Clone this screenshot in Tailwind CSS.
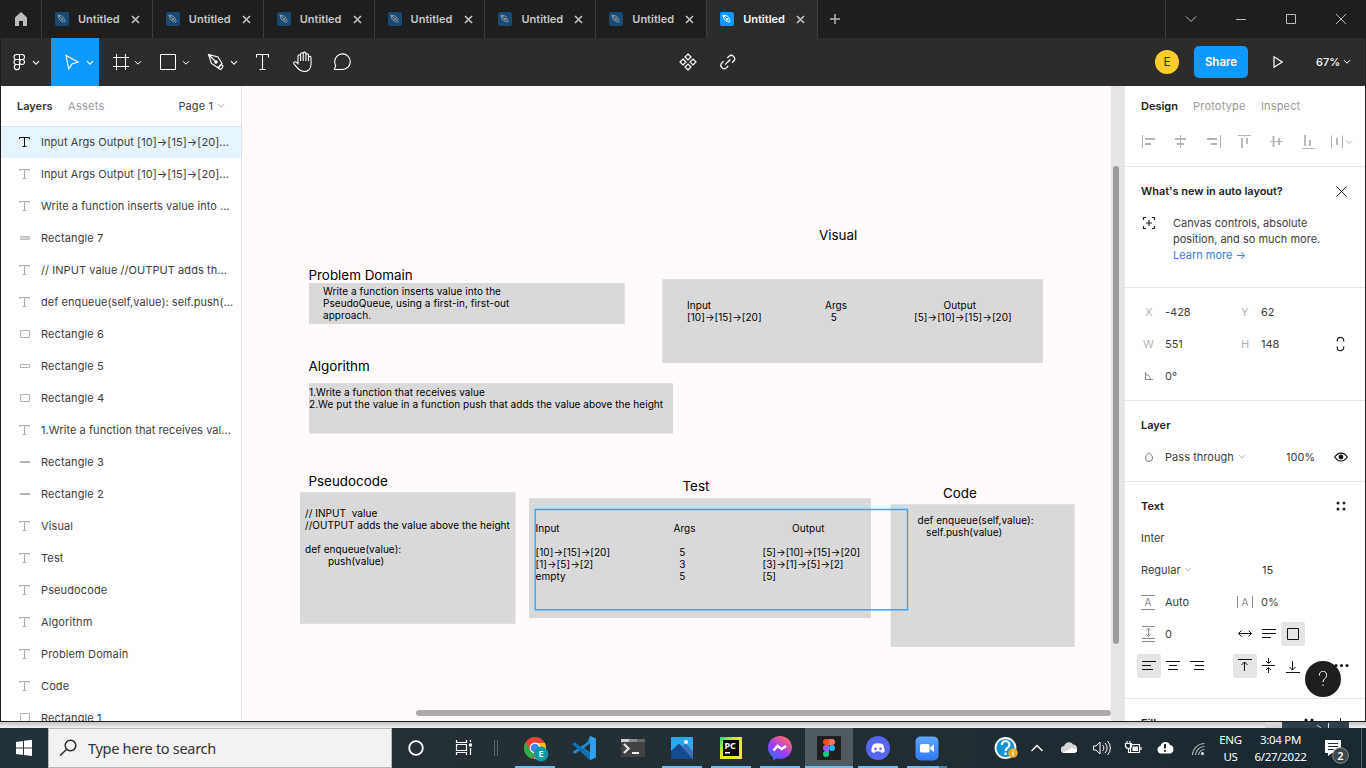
<!DOCTYPE html>
<html lang="en">
<head>
<meta charset="utf-8">
<title>Untitled – Figma</title>
<script src="https://cdn.jsdelivr.net/npm/@tailwindcss/browser@4"></script>
</head>
<body class="w-[1366px] h-[768px] overflow-hidden bg-[#e4e4e4] font-['Inter','Liberation_Sans',sans-serif] text-[11px] text-[#3c3c3c]">
<svg class="hidden">
  <symbol id="chev" viewBox="0 0 8 6"><path d="M1 1.2 4 4.2 7 1.2" fill="none" stroke="currentColor"/></symbol>
  <symbol id="tabpen" viewBox="0 0 14 14"><path d="M3 3l4.5 1.2 2.3 3.6-2 2-3.6-2.3zM3 3l4 4M8.8 10.8l2-2" fill="none" stroke="currentColor"/><circle cx="7.2" cy="7.2" r="1" fill="currentColor"/></symbol>
  <symbol id="x" viewBox="0 0 9 9"><path d="M1 1l7 7M8 1l-7 7" fill="none" stroke="currentColor" stroke-width="1.7"/></symbol>
  <symbol id="T" viewBox="0 0 12 12"><path d="M.5 3V1.500h10V3M5.500 1.500v9M3.500 10.500h4" fill="none" stroke="currentColor"/></symbol>
</svg>
<div class="flex flex-col h-[768px]">
  <div class="flex flex-col h-[722px] shrink-0 border-x border-b border-[#1e1e1e] bg-white">
    <!-- tab strip -->
    <div class="flex h-[38px] shrink-0 bg-[#1e1e1e] text-[#c6c6c6]">
      <div class="w-10 shrink-0"><svg class="w-10 h-[38px]" viewBox="1 0 40 38"><path d="M15 17.500 21 12l6 5.500V26h-4v-5h-4v5h-4z" fill="#bdbdbd"/></svg></div>
      <div id="tabs" class="flex w-[777px] shrink-0 border-r border-[#3a3a3a]"></div>
      <div class="flex w-[34px] items-center justify-center"><svg class="size-[10px]" viewBox="0 0 10 10"><path d="M5 0v10M0 5h10" stroke="#b8b8b8" stroke-width="1.500"/></svg></div>
      <svg class="ml-auto w-[200px] h-[38px] shrink-0" viewBox="1165 0 200 38" fill="none" stroke="#bdbdbd"><path d="M1165.500 0v38" stroke="#3a3a3a"/><path d="M1186 16.500l5 5 5-5M1236 19.500h10M1286.500 14.500h9v9h-9zM1336 14l10 10M1346 14l-10 10"/></svg>
    </div>
    <!-- toolbar -->
    <div class="flex h-12 shrink-0 bg-[#2c2c2c] text-white">
      <svg class="w-[50px] h-12" viewBox="1 38 50 48" fill="none" stroke="#fff" stroke-width="1.100"><path d="M19.500 54.500h-3a2.500 2.500 0 000 5h3zM19.500 54.500h2.500a2.500 2.500 0 010 5h-2.500zM19.500 59.500h-3a2.500 2.500 0 000 5h3zM16.500 64.500h3v2.500a2.600 2.600 0 11-3-2.500z"/><circle cx="22" cy="62" r="2.500"/><path d="M33 61.200l3 3 3-3"/></svg>
      <div class="w-12 bg-[#0d99ff]"><svg class="w-12 h-12" viewBox="51 38 48 48" fill="none" stroke="#fff" stroke-width="1.200"><path d="M66 55.500l12 6.500-6 2-3.300 5z"/><path d="M87 61.200l3 3 3-3"/></svg></div>
      <svg class="w-12 h-12" viewBox="99 38 48 48" fill="none" stroke="#fff"><path d="M116.500 54v16M125.500 54v16M113 57.500h16M113 66.500h16M135 61.200l3 3 3-3"/></svg>
      <svg class="w-12 h-12" viewBox="147 38 48 48" fill="none" stroke="#fff"><path d="M160.500 54.500h15v15h-15zM183 61.200l3 3 3-3"/></svg>
      <svg class="w-12 h-12" viewBox="195 38 48 48" fill="none" stroke="#fff" stroke-width="1.100"><path d="M208.500 54.500l9.500 2.500 4 6.500-3.500 3.500-1 .5-6-4zM208.500 54.500l7.500 7.500M218.500 68.500l1-2 2-2 1.300 1v1.500l-2 2.500z"/><circle cx="216" cy="62" r="1.200" fill="#fff"/><path d="M231 61.200l3 3 3-3"/></svg>
      <svg class="w-10 h-12" viewBox="243 38 40 48" fill="none" stroke="#fff" stroke-width="1.100"><path d="M256.500 57.500v-3h12v3M262.500 54.500v15M259.500 69.500h6"/></svg>
      <svg class="w-10 h-12" viewBox="283 38 40 48" fill="none" stroke="#fff" stroke-width="1.100"><path d="M298 62v-6a1.300 1.300 0 012.600 0v-2a1.300 1.300 0 012.600 0v-.5a1.300 1.300 0 012.700 0v1.500a1.300 1.300 0 012.600 0v2.500a1.250 1.250 0 012.500 0v7c0 4-2.600 7-6.800 7-4.700 0-6.200-3-10.100-7.300-1.300-1.500.6-3.200 2.200-2l1.700 1.500zM300.600 55.500v5.500M303.200 54v7M305.900 54v7M308.500 56v5"/></svg>
      <svg class="w-10 h-12" viewBox="323 38 40 48" fill="none" stroke="#fff" stroke-width="1.100"><path d="M334.300 69.500h8.200a7.800 7.800 0 10-7.800-7.500c0 1.500.4 2.700 1 3.700z"/></svg>
      <svg class="ml-[305px] w-10 h-12" viewBox="668 38 40 48" fill="none" stroke="#fff" stroke-width="1.200"><path d="M688 54l3 3-3 3-3-3zM688 64l3 3-3 3-3-3zM683 59l3 3-3 3-3-3zM693 59l3 3-3 3-3-3z"/></svg>
      <svg class="w-10 h-12" viewBox="708 38 40 48" fill="none" stroke="#fff" stroke-width="1.300"><path d="M727.300 58l1.600-1.600a3.300 3.300 0 014.700 4.700l-1.600 1.600M728.200 66l-1.600 1.600a3.300 3.300 0 01-4.700-4.700l1.600-1.600M725.300 64.500l5-5"/></svg>
      <div class="ml-auto mr-[14px] flex items-center">
        <div class="flex size-6 items-center justify-center rounded-full bg-[#ffcd29] text-xs text-[#333]">E</div>
        <div class="ml-[15px] flex h-8 w-[54px] items-center justify-center rounded-[5px] bg-[#0d99ff] pt-px text-[11.500px] font-semibold">Share</div>
        <svg class="ml-[22px] w-4 h-4" viewBox="1270 54 16 16" fill="none" stroke="#fff" stroke-width="1.200"><path d="M1274 56.800v10.400l8.300-5.200z"/></svg>
        <div class="ml-[30px] w-[27px] pt-px text-[11px] font-medium">67%</div>
        <svg class="w-2 h-1.5"><use href="#chev"/></svg>
      </div>
    </div>
    <!-- workspace -->
    <div class="flex h-[635px] shrink-0 overflow-hidden">
      <div class="w-[241px] shrink-0 border-r border-[#e5e5e5] overflow-hidden">
        <div class="flex h-10 items-center pl-4 pr-4">
          <span class="w-[51px] font-semibold text-[#333]">Layers</span><span class="text-[#9a9a9a] tracking-[.3px]">Assets</span>
          <span class="ml-auto mr-1 tracking-[.1px]">Page 1</span><svg class="w-2 h-1.5 text-[#aaa]"><use href="#chev"/></svg>
        </div>
        <div id="layers"></div>
      </div>
      <!-- canvas -->
      <div id="canvas" class="relative w-[869px] shrink-0 overflow-hidden bg-[#fffbfa] text-[10px] leading-[12.1px] tracking-[.055px] text-black whitespace-pre">
        <svg class="absolute left-0 top-0 w-[869px] h-[635px]" viewBox="242 86 869 635" fill="#d9d9d9"><path d="M309 283h315.700v41H309zM662.300 279.300H1043V363H662.300zM309 383.300h364v50.300H309zM300 492.300h215.500v131.500H300zM529 498.300h342V618H529zM890.600 504.300h184V647h-184z"/></svg>
        <div class="absolute left-[66.500px] top-[181px] text-[13.400px] leading-4 tracking-normal">Problem Domain</div>
        <div class="absolute left-[66.500px] top-[272px] text-[13.400px] leading-4 tracking-normal">Algorithm</div>
        <div class="absolute left-[577px] top-[141px] text-[13.400px] leading-4 tracking-normal">Visual</div>
        <div class="absolute left-[66.500px] top-[387px] text-[13.400px] leading-4 tracking-normal">Pseudocode</div>
        <div class="absolute left-[440.500px] top-[392px] text-[13.400px] leading-4 tracking-normal">Test</div>
        <div class="absolute left-[701px] top-[399px] text-[13.400px] leading-4 tracking-normal">Code</div>
        <div class="absolute left-[81px] top-[199px]">Write a function inserts value into the
PseudoQueue, using a first-in, first-out
approach.</div>
        <div class="absolute left-[67px] top-[300px]">1.Write a function that receives value
2.We put the value in a function push that adds the value above the height</div>
        <div class="absolute left-[445px] top-[213px]">Input
[10]→[15]→[20]</div>
        <div class="absolute left-[583px] top-[213px]">Args
  5</div>
        <div class="absolute left-[672px] top-[213px]"><span class="pl-[29.500px]">Output</span>
[5]→[10]→[15]→[20]</div>
        <div class="absolute left-[63px] top-[420.500px]">// INPUT  value
//OUTPUT adds the value above the height

def enqueue(value):
        push(value)</div>
        <div class="absolute left-[293.500px] top-[436px]">Input

[10]→[15]→[20]
[1]→[5]→[2]
empty</div>
        <div class="absolute left-[431.500px] top-[436px]">Args

  5
  3
  5</div>
        <div class="absolute left-[520.500px] top-[436px]"><span class="pl-[29.500px]">Output</span>

[5]→[10]→[15]→[20]
[3]→[1]→[5]→[2]
[5]</div>
        <div class="absolute left-[675.500px] top-[427.500px]">def enqueue(self,value):
   self.push(value)</div>
        <svg class="absolute left-[292px] top-[422px] w-[375px] h-[104px]" viewBox="534 508 375 104" fill="none"><path d="M535.200 509.500h372.300v100.300H535.200z" stroke="#37a5fb" stroke-width="1.400"/></svg>
        <div class="absolute left-[174px] top-[624px] w-[695px] h-1.5 rounded-full bg-[#adacab]"></div>
      </div>
      <div class="w-[14px] shrink-0 bg-[#e5e5e5] pl-0.5 pt-20"><div class="h-[478px] w-1.5 rounded-full bg-[#9c9c9c]"></div></div>
      <!-- inspector -->
      <div class="w-[240px] shrink-0">
        <div class="h-[81px] border-b border-[#e5e5e5]">
          <div class="flex h-10 items-center pl-4"><span class="w-[52px] font-semibold text-[#222]">Design</span><span class="w-[68px] text-[#999] tracking-[.2px]">Prototype</span><span class="text-[#999] tracking-[.15px]">Inspect</span></div>
          <svg class="w-[240px] h-10" viewBox="1125 126 240 40" fill="none" stroke="#b3b3b3"><path d="M1142.500 135v13M1220.500 135v13M1238 135.500h13M1302 148.500h13M1180.500 135v13M1270 141.500h13M1331.500 135.500v13M1342.500 135.500v13"/><path d="M1145 139h10M1145 144h6M1175 139h11M1177 144h7M1207 139h10M1211 144h6M1242 138v10M1247 138v6M1273.500 136v11M1279 138v7M1305 135v11M1310 140v6M1337 138v7" stroke-width="1.800"/><path d="M1346 140.500l3 3 3-3"/></svg>
        </div>
        <div class="h-[121px] border-b border-[#e5e5e5]">
          <div class="flex h-12 items-center pl-4 pr-[18px] justify-between"><span class="font-semibold text-[#222] tracking-[-.04px]">What's new in auto layout?</span><svg class="size-[11px]" viewBox="0 0 11 11"><path d="M.5.5l10 10M10.500.5l-10 10" stroke="#222"/></svg></div>
          <div class="flex pl-[17px]"><svg class="mt-px size-[14px] shrink-0" viewBox="1142 216 14 14" fill="none" stroke="#222" stroke-width="1.200"><path d="M1143.500 220v-2.500h2.500M1152 217.500h2.500v2.500M1154.500 226v2.500h-2.500M1146 228.500h-2.500v-2.500M1149 220v6M1146 223h6"/></svg>
          <div class="ml-[17px] leading-4 whitespace-pre">Canvas controls, absolute
position, and so much more.
<span class="text-[#3a7bf0]">Learn more →</span></div></div>
        </div>
        <div class="h-[113px] border-b border-[#e5e5e5] pt-2">
          <div class="flex h-8 items-center pl-5"><span class="w-5 text-[#b3b3b3]">X</span><span class="w-[76px]">-428</span><span class="w-5 text-[#b3b3b3]">Y</span><span>62</span></div>
          <div class="flex h-8 items-center pl-[18px]"><span class="w-[22px] text-[#b3b3b3]">W</span><span class="w-[76px]">551</span><span class="w-5 text-[#b3b3b3]">H</span><span class="w-[74px]">148</span><svg class="w-[10px] h-4" viewBox="1335 336 10 16" fill="none" stroke="#222" stroke-width="1.200"><path d="M1337.300 341.500v-1a3.200 3.200 0 016.400 0v1M1337.300 346.500v1a3.200 3.200 0 006.400 0v-1"/></svg></div>
          <div class="flex h-8 items-center pl-[19px]"><svg class="w-[21px] h-4" viewBox="1144 368 21 16" fill="none" stroke="#888"><path d="M1145.500 372v7.500h7.500M1145.500 374.500a5 5 0 015 5"/></svg><span>0°</span></div>
        </div>
        <div class="h-[81px] border-b border-[#e5e5e5]">
          <div class="flex h-12 items-center pl-4 font-semibold text-[#222]">Layer</div>
          <div class="-mt-2 flex h-8 items-center pl-5"><svg class="w-5 h-3.5" viewBox="1145 450 20 14" fill="none" stroke="#777"><path d="M1149 452.500c2.500 2.500 3.500 4 3.500 5.500a3.500 3.500 0 01-7 0c0-1.500 1-3 3.500-5.500z"/></svg><span class="w-[73px] tracking-[.05px]">Pass through</span><svg class="w-2 h-1.5 text-[#b0b0b0]"><use href="#chev"/></svg><span class="ml-10 w-12">100%</span><svg class="w-[14px] h-[10px]" viewBox="0 0 14 10" fill="none" stroke="#111" stroke-width="1.200"><path d="M.7 5C4-.3 10-.3 13.300 5 10 10.300 4 10.300.7 5z"/><circle cx="7" cy="5" r="1.800" fill="#111"/></svg></div>
        </div>
        <div class="relative h-[217px] border-b border-[#e5e5e5]">
          <div class="flex h-12 items-center justify-between pl-4 pr-[19px] font-semibold text-[#222]"><span>Text</span><svg class="size-[10px]" viewBox="0 0 10 10" fill="#222"><circle cx="2" cy="2" r="1.500"/><circle cx="8" cy="2" r="1.500"/><circle cx="2" cy="8" r="1.500"/><circle cx="8" cy="8" r="1.500"/></svg></div>
          <div class="-mt-2 flex h-8 items-center pl-4">Inter</div>
          <div class="flex h-8 items-center pl-4"><span class="w-[43px]">Regular</span><svg class="w-2 h-1.5 text-[#b0b0b0]"><use href="#chev"/></svg><span class="ml-[70px]">15</span></div>
          <div class="flex h-8 items-center pl-4 text-[#888]"><span class="flex h-[15px] w-[14px] items-center justify-center border-y border-[#888] text-[10px]">A</span><span class="ml-[10px] w-[72px] text-[#3c3c3c]">Auto</span><span class="flex h-3 w-4 items-center justify-center border-x border-[#888] text-[10px]">A</span><span class="ml-2 text-[#3c3c3c]">0%</span></div>
          <div class="flex h-8 items-center pl-4"><svg class="w-6 h-4" viewBox="1141 626 24 16" fill="none" stroke="#888"><path d="M1142 626.500h13M1142 638.500h13M1142 641.500h13M1148.500 628.500v7M1146 630.500l2.500-2.500 2.500 2.500M1146 634l2.500 2.500 2.500-2.500"/></svg><span class="w-[68px]">0</span>
            <svg class="size-6" viewBox="1233 622 24 24" fill="none" stroke="#111"><path d="M1238.500 633.500h13M1241.500 630.500l-3 3 3 3M1248.500 630.500l3 3-3 3"/></svg>
            <svg class="size-6" viewBox="1257 622 24 24" fill="none" stroke="#111"><path d="M1262 629.500h14M1262 633.500h14M1262 637.500h9"/></svg>
            <svg class="size-6 rounded-xs bg-[#e5e5e5]" viewBox="1281 622 24 24" fill="none" stroke="#111"><path d="M1287.500 628.500h11v11h-11z"/></svg></div>
          <div class="flex h-8 items-center pl-3">
            <svg class="size-6 rounded-xs bg-[#e5e5e5]" viewBox="1137 654 24 24" fill="none" stroke="#111"><path d="M1142 661.500h14M1142 665.500h9M1142 669.500h11"/></svg>
            <svg class="size-6" viewBox="1161 654 24 24" fill="none" stroke="#111"><path d="M1166 661.500h14M1169 665.500h8M1168 669.500h10"/></svg>
            <svg class="size-6" viewBox="1185 654 24 24" fill="none" stroke="#111"><path d="M1190 661.500h14M1195 665.500h9M1194 669.500h10"/></svg>
            <svg class="ml-6 size-6 rounded-xs bg-[#e5e5e5]" viewBox="1233 654 24 24" fill="none" stroke="#111"><path d="M1238 659.500h14M1244.500 671v-9M1241.500 665l3-3 3 3"/></svg>
            <svg class="size-6" viewBox="1257 654 24 24" fill="none" stroke="#111"><path d="M1262 665.500h13M1268.500 658v5M1266 661l2.500 2.500 2.500-2.500M1268.500 673v-5M1266 670l2.500-2.500 2.500 2.500"/></svg>
            <svg class="size-6" viewBox="1281 654 24 24" fill="none" stroke="#111"><path d="M1286 672.500h14M1292.500 661v9M1289.500 667l3 3 3-3"/></svg>
            <svg class="ml-6 w-6 h-6" viewBox="1329 654 24 24" fill="#111"><circle cx="1336" cy="665.500" r="1.500"/><circle cx="1341.500" cy="665.500" r="1.500"/><circle cx="1347" cy="665.500" r="1.500"/></svg>
          </div>
          <div class="absolute left-[180px] top-[179px] flex size-9 items-center justify-center rounded-full bg-[#1e1e1e]"><svg class="w-3 h-4" viewBox="0 0 12 16" fill="none" stroke="#fff"><path d="M2.500 4.500a3.600 3.600 0 117 .2C9.500 7.500 6 7.500 6 11M6 13.500v1.500"/></svg></div>
        </div>
        <div class="flex h-12 items-center justify-between pl-4 pr-[19px] font-semibold text-[#222]"><span>Fill</span><svg class="w-[43px] h-[11px]" viewBox="0 0 43 11"><g fill="#111"><circle cx="3" cy="2" r="1.500"/><circle cx="9" cy="2" r="1.500"/><circle cx="3" cy="8" r="1.500"/><circle cx="9" cy="8" r="1.500"/></g><path d="M37.500 0v11M32 5.500h11" stroke="#111"/></svg></div>
      </div>
    </div>
  </div>
  <!-- strip between window and taskbar -->
  <div class="flex h-1.5 shrink-0 bg-linear-to-b from-[#c2c2c2] to-[#f2f2f2]"><div class="ml-[1265px] w-[17px] bg-[#d5d5d5]"></div><div class="w-[67px] bg-[#2f3f4c]"><svg class="w-[67px] h-1.5" viewBox="1282 722 67 6" fill="none" stroke="#ddd"><path d="M1317 725l4 3M1328.500 723v5"/></svg></div></div>
  <!-- taskbar -->
  <div class="flex h-10 shrink-0 bg-linear-to-r from-[#24323a] via-[#242f34] to-[#1a2830] font-['Noto_Sans','Open_Sans',sans-serif] text-white">
    <svg class="w-12 h-10 shrink-0" viewBox="0 728 48 40" fill="#fff"><path d="M16 742l7-1v6.500h-7zM24 740.800l8-1v7.700h-8zM16 748.500h7v6.500l-7-1zM24 748.500h8v7.500l-8-1z"/></svg>
    <div class="flex w-[344px] shrink-0 items-center border border-[#b9b9b9] bg-[#f2f2f2] text-[#333]"><svg class="ml-2.5 w-[18px] h-[18px]" viewBox="59 739 18 18" fill="none" stroke="#222" stroke-width="1.400"><circle cx="70.500" cy="745.500" r="5.300"/><path d="M66.500 749.500l-6.500 6"/></svg><span class="ml-[11px] pt-px text-[14.500px] tracking-[-.29px]">Type here to search</span></div>
    <svg class="w-12 h-10 shrink-0" viewBox="392 728 48 40"><circle cx="416" cy="748" r="6.800" fill="none" stroke="#fff" stroke-width="1.800"/></svg>
    <svg class="w-12 h-10 shrink-0" viewBox="440 728 48 40" fill="none" stroke="#fff" stroke-width="1.200"><path d="M456.500 740v2.500h10V740M456.500 755v-2.500h10v2.500M456.500 744.500h10v6h-10zM470.500 740v2M470.500 748v7"/><path d="M469 743.500h3v3h-3z" fill="#fff" stroke="none"/></svg>
    <svg class="w-[23px] h-10 shrink-0" viewBox="488 728 23 40"><path d="M494.500 740v16M497.500 740v16" stroke="#5d666b"/></svg>
    <svg class="w-[440px] h-10 shrink-0" viewBox="511 728 440 40">
      <defs>
        <linearGradient id="ms" x1="0" y1="1" x2=".7" y2="0"><stop offset="0" stop-color="#1a7bff"/><stop offset=".5" stop-color="#9a3cff"/><stop offset="1" stop-color="#ff6a6a"/></linearGradient>
        <linearGradient id="pc" x1="0" y1="0" x2="1" y2="1"><stop offset="0" stop-color="#21d789"/><stop offset=".35" stop-color="#d8e52a"/><stop offset="1" stop-color="#f4f02a"/></linearGradient>
        <linearGradient id="zm" x1="0" y1="0" x2="0" y2="1"><stop offset="0" stop-color="#5ea6ff"/><stop offset="1" stop-color="#2f78f5"/></linearGradient>
      </defs>
      <path d="M805 728h48v40h-48z" fill="#505b61"/>
      <g fill="#76b9ed"><path d="M515 766h40v2h-40zM662 766h40v2h-40zM711 766h40v2h-40zM760 766h40v2h-40zM805 766h48v2h-48zM858 766h40v2h-40zM907 766h32v2h-32z"/><path d="M939 766h8v2h-8z" fill="#4d7f9f"/></g>
      <!-- chrome -->
      <g><circle cx="535" cy="748" r="11" fill="#ea4335"/><path d="M535 748h11a11 11 0 01-12 11z" fill="#fbc116"/><path d="M535 743h9.800a11 11 0 011.200 5h-11z" fill="#fbc116"/><path d="M525.500 742.500l5 8.500 4.500 2-3 5.600a11 11 0 01-6.500-16.100z" fill="#2da94f"/><circle cx="535" cy="748" r="5.400" fill="#fff"/><circle cx="535" cy="748" r="4.300" fill="#4285f4"/><circle cx="541" cy="754" r="7.400" fill="#0f97a3"/><text x="541" y="757.300" text-anchor="middle" font-size="9" font-weight="600" fill="#fff">E</text></g>
      <!-- editor -->
      <path d="M590 736l5.800 2.500v19l-5.800 2.500-10.500-9.500-4.200 3.300-2.300-1.200v-1.200L587 742.500z" fill="#1f8ad2"/><path d="M572.500 743.500l2.500-1.200 15 11.700v5.500l-17-14.500z" fill="#0f6fb5"/><path d="M590 736l5.800 2.500v19L590 760z" fill="#2ba3f0"/><path d="M590 743.500v9l-6-4.500z" fill="#242f35"/>
      <!-- terminal -->
      <path d="M621 739h24v18h-24z" fill="#424242"/><path d="M621 739h8v3h-8z" fill="#d0d0d0"/><path d="M629 739h8v3h-8z" fill="#8d8d8d"/><path d="M637 739h8v3h-8z" fill="#666"/><path d="M624 744l4.500 4.500-4.500 4.500" fill="none" stroke="#ddd" stroke-width="2.400"/><path d="M632 752h7v2h-7z" fill="#eee"/>
      <!-- photos -->
      <path d="M671 737h22v22h-22z" fill="#2ea6ea"/><path d="M671 751l8-7.500 15 15.500h-23z" fill="#154a8d"/><path d="M682 747l3.500-3.500 7.500 8v7.500z" fill="#3d6fbb"/><circle cx="686" cy="742" r="2" fill="#fff"/>
      <!-- pycharm -->
      <path d="M720 737h22v22h-22z" fill="url(#pc)"/><path d="M723 740h16v16h-16z" fill="#0a0a0a"/><text x="724.500" y="748.500" font-size="9" font-weight="700" fill="#fff">PC</text><path d="M725 752h5v1.500h-5z" fill="#fff"/>
      <!-- messenger -->
      <path d="M780 736c6.800 0 12 5 12 11.500S786.800 759 780 759l-3-.4-4 1.600v-3c-3.200-2.200-5-5.700-5-9.700 0-6.500 5.200-11.500 12-11.500z" fill="url(#ms)"/><path d="M773.500 750.500l4-4.500 4 3 4.500-3" fill="none" stroke="#fff" stroke-width="2.500"/>
      <!-- figma -->
      <path d="M817 736h24v24h-24z" fill="#1f1f1f"/><path d="M829 739h-3a3 3 0 000 6h3z" fill="#f24e1e"/><path d="M829 739h3a3 3 0 010 6h-3z" fill="#ff7262"/><path d="M829 745h-3a3 3 0 000 6h3z" fill="#a259ff"/><circle cx="832" cy="748" r="3" fill="#1abcfe"/><path d="M829 751h-3a3 3 0 103 3z" fill="#0acf83"/>
      <!-- discord -->
      <circle cx="878" cy="748" r="12" fill="#5865f2"/><path d="M873.500 744c3-1 6-1 9 0 1.500 2.300 2.300 4.500 2 7.500-1 1-2 1.300-3 1.500l-1-1.500h-5l-1 1.500c-1-.2-2-.5-3-1.500-.3-3 .5-5.200 2-7.500z" fill="#fff"/><circle cx="875.500" cy="748.800" r="1.300" fill="#5865f2"/><circle cx="880.500" cy="748.800" r="1.300" fill="#5865f2"/>
      <!-- zoom -->
      <rect x="915.500" y="736.500" width="23" height="24" rx="5" fill="url(#zm)"/><rect x="920" y="744" width="9.500" height="8.500" rx="1.500" fill="#fff"/><path d="M930 747.500l4-3v7.500l-4-3z" fill="#fff"/>
    </svg>
    <svg class="ml-auto w-[230px] h-10 shrink-0" viewBox="985 728 230 40" fill="none" stroke="#fff" stroke-width="1.200">
      <circle cx="1005.500" cy="748" r="10" fill="#1193d3" stroke-width="1.800"/><path d="M1001.800 745a3.800 3.500 0 117 1.500c-1 1.500-3.300 1.800-3.300 4.500M1005.500 752.500v2.500" stroke-width="2.200"/><circle cx="1013" cy="753" r="4.800" fill="#e9a820" stroke="none"/><path d="M1013 750v1.200M1013 752.300v3.500" stroke-width="1.400"/>
      <path d="M1031.500 751l5.500-5.500 5.500 5.500" stroke-width="1.400"/>
      <path d="M1064.500 753a3.500 3.500 0 01-.3-7 5 5 0 019-1.500 4.300 4.300 0 01.5 8.500z" fill="#d6d6d6" stroke="none"/><path d="M1063 752.800l9-5 5 2.500c0 2-1.500 2.700-3 2.700h-10z" fill="#fff" stroke="none"/>
      <path d="M1093.500 746h2.500l4-4v12l-4-4h-2.500zM1102.500 745a4 4 0 010 6M1105 743a7 7 0 010 10M1107.500 741a10 10 0 010 14" stroke-width="1"/>
      <path d="M1130.500 744.500h9v8h-9zM1141 747v3M1127 741v2.500M1130 741v2.500M1125.500 743.500h6v2a3 3 0 01-6 0zM1128.500 748.500v4h2"/><path d="M1132.500 746.500h5.500v4.500h-5.500z" fill="#fff" stroke="none"/>
      <path d="M1161 753.500a3.800 3.800 0 01-.5-7.500 5 5 0 019.500-1 4.300 4.300 0 01-.5 8.500z" fill="#fff" stroke="none"/><path d="M1165 744v4.500M1165 750v1.800" stroke="#1f2b31" stroke-width="2"/>
      <path d="M1192.500 755a12 12 0 0112-11.500M1195.500 755a9 9 0 019-8.500M1198.500 755a6 6 0 016-5.500" stroke="#aab0b3"/><circle cx="1202.500" cy="753.500" r="1.500" fill="#fff" stroke="none"/>
    </svg>
    <div class="flex w-[31px] shrink-0 flex-col items-center justify-center text-[11.500px] leading-[17.500px] tracking-[-.4px]"><span>ENG</span><span>US</span></div>
    <div class="flex w-[69px] shrink-0 flex-col items-center justify-center text-[11.500px] leading-[17.500px] tracking-[-.3px]"><span>3:04 PM</span><span>6/27/2022</span></div>
    <svg class="w-[51px] h-10 shrink-0" viewBox="1315 728 51 40"><path d="M1325 740h16v13h-9l-4 3v-3h-3z" fill="#fff"/><path d="M1328 743.500h10M1328 746.500h10M1328 749.500h6" stroke="#1f2b31"/><circle cx="1340.500" cy="755.500" r="7.800" fill="#3f474b" stroke="#888e91"/><text x="1340.500" y="759.500" text-anchor="middle" font-size="11" font-weight="600" fill="#fff">2</text><path d="M1361.500 728v40" stroke="#59646a"/></svg>
  </div>
</div>
<script>
const tabs = document.getElementById('tabs');
for (let i = 0; i < 7; i++) {
  const on = i === 6;
  tabs.insertAdjacentHTML('beforeend', `<div class="flex flex-1 items-center border-l border-[#3a3a3a] pl-[13px] ${on ? 'bg-[#2c2c2c] text-white' : ''}">
    <svg class="size-[14px] rounded-xs ${on ? 'bg-[#0d99ff] text-white' : 'bg-[#184a73] text-[#8f9aa3]'}"><use href="#tabpen"/></svg>
    <span class="ml-[9px] w-[53px] font-semibold">Untitled</span>
    <svg class="size-[9px] text-[#c0c0c0]"><use href="#x"/></svg></div>`);
}
const icons = {
  t: '<svg class="size-3"><use href="#T"/></svg>',
  a: '<svg class="w-3 h-2" viewBox="0 0 12 8"><path d="M1.500 2.500h9v3h-9z" fill="#d4d4d4" stroke="#c0c0c0"/></svg>',
  b: '<svg class="w-3 h-2" viewBox="0 0 12 8"><path d="M1.500.5h9v7h-9z" fill="none" stroke="#b3b3b3"/></svg>',
  c: '<svg class="w-3 h-2" viewBox="0 0 12 8"><path d="M1.500 2.500h9v3h-9z" fill="none" stroke="#b3b3b3"/></svg>',
  d: '<svg class="w-3 h-2" viewBox="0 0 12 8"><path d="M1 3h10v2H1z" fill="#b3b3b3"/></svg>',
  e: '<svg class="size-3" viewBox="0 0 12 12"><path d="M1.500 1.500h9v9h-9z" fill="none" stroke="#b3b3b3"/></svg>'
};
const rows = [['t','Input Args Output [10]→[15]→[20]...'],['t','Input Args Output [10]→[15]→[20]...'],['t','Write a function inserts value into ...'],['a','Rectangle 7'],['t','// INPUT value //OUTPUT adds th...'],['t','def enqueue(self,value): self.push(...'],['b','Rectangle 6'],['c','Rectangle 5'],['b','Rectangle 4'],['t','1.Write a function that receives val...'],['d','Rectangle 3'],['d','Rectangle 2'],['t','Visual'],['t','Test'],['t','Pseudocode'],['t','Algorithm'],['t','Problem Domain'],['t','Code'],['e','Rectangle 1']];
const list = document.getElementById('layers');
rows.forEach(([k, s], i) => list.insertAdjacentHTML('beforeend',
  `<div class="flex h-8 items-center pl-[18px] whitespace-nowrap ${i ? 'text-[#aaa]' : 'bg-[#e5f4ff] text-[#111] shadow-[inset_0_1px_#e0e4e8]'}">${icons[k]}<span class="ml-[10px] text-[#3c3c3c] ${k === 't' && s.length > 20 ? 'tracking-[.06px]' : 'tracking-[.12px]'}">${s}</span></div>`));
</script>
</body>
</html>
